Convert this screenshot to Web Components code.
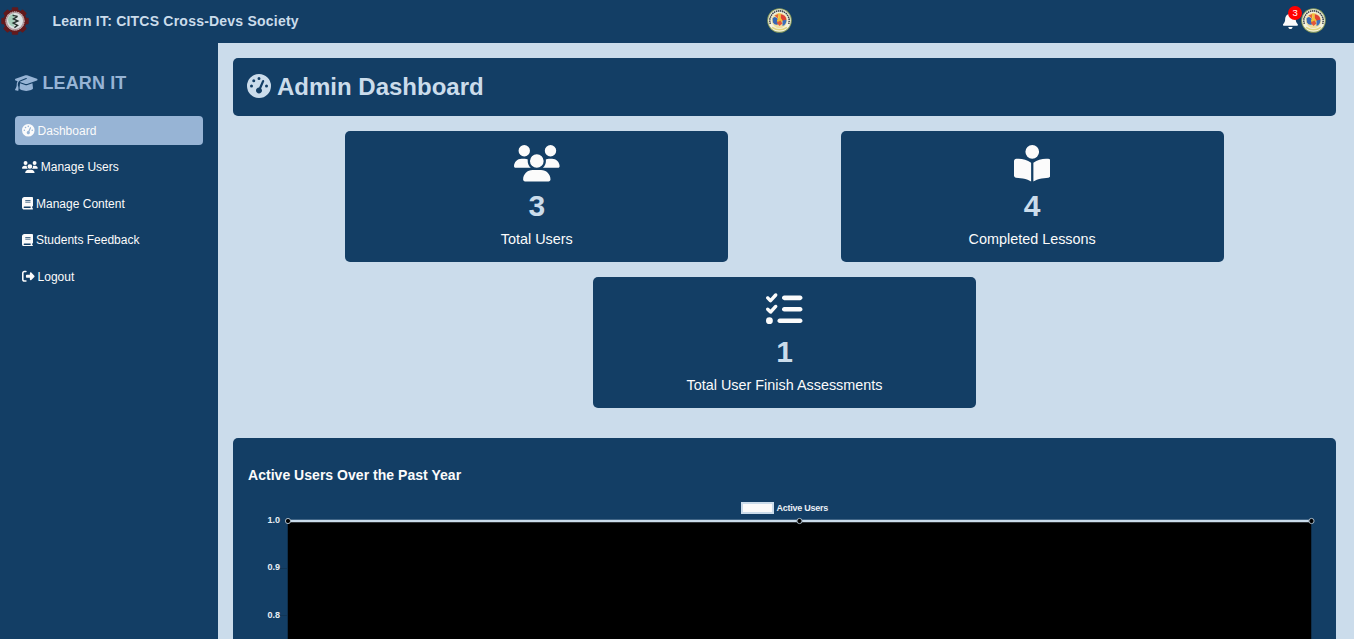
<!DOCTYPE html>
<html lang="en">
<head>
<meta charset="utf-8">
<title>Admin Dashboard</title>
<style>
:root{--navy:#133e65;--pale:#cbdceb;--mid:#97b4d5;--white:#fbfbfb}
html,body{margin:0;height:100%;overflow:hidden}
body{background:var(--pale);font-family:"Liberation Sans",Arial,sans-serif;color:var(--white)}
</style>
</head>
<body>
<dash-app></dash-app>
<script>
const ICONS={
gauge:[512,'M0 256a256 256 0 1 1 512 0A256 256 0 1 1 0 256zM288 96a32 32 0 1 0 -64 0 32 32 0 1 0 64 0zM256 416c35.3 0 64-28.7 64-64c0-17.4-6.9-33.1-18.1-44.6L366 161.7c5.3-12.1-.2-26.3-12.3-31.6s-26.3 .2-31.6 12.3L257.9 288c-.6 0-1.3 0-1.9 0c-35.3 0-64 28.7-64 64s28.7 64 64 64zM176 144a32 32 0 1 0 -64 0 32 32 0 1 0 64 0zM96 288a32 32 0 1 0 0-64 32 32 0 1 0 0 64zm352-32a32 32 0 1 0 -64 0 32 32 0 1 0 64 0z'],
users:[640,'M144 0a80 80 0 1 1 0 160A80 80 0 1 1 144 0zM512 0a80 80 0 1 1 0 160A80 80 0 1 1 512 0zM0 298.7C0 239.8 47.8 192 106.7 192h42.7c15.9 0 31 3.5 44.6 9.7c-1.3 7.2-1.9 14.7-1.9 22.3c0 38.2 16.8 72.5 43.3 96c-.2 0-.4 0-.7 0H21.3C9.6 320 0 310.4 0 298.7zM405.3 320c-.2 0-.4 0-.7 0c26.6-23.5 43.3-57.8 43.3-96c0-7.6-.7-15-1.9-22.3c13.6-6.3 28.7-9.7 44.6-9.7h42.7C592.2 192 640 239.8 640 298.7c0 11.8-9.6 21.3-21.3 21.3H405.3zM224 224a96 96 0 1 1 192 0 96 96 0 1 1 -192 0zM128 485.3C128 411.7 187.7 352 261.3 352H378.7C452.3 352 512 411.7 512 485.3c0 14.7-11.9 26.7-26.7 26.7H154.7c-14.7 0-26.7-11.9-26.7-26.7z'],
reader:[512,'M160 96a96 96 0 1 1 192 0A96 96 0 1 1 160 96zm80 152V512l-48.4-24.2c-20.9-10.4-43.5-17-66.8-19.3l-96-9.6C12.5 457.2 0 443.5 0 427V224c0-17.7 14.3-32 32-32H62.3c63.6 0 125.6 19.6 177.7 56zm32 264V248c52.1-36.4 114.1-56 177.7-56H480c17.7 0 32 14.3 32 32V427c0 16.4-12.5 30.2-28.8 31.8l-96 9.6c-23.2 2.3-45.9 8.9-66.8 19.3L272 512z'],
tasks:[512,'M152.1 38.2c9.9 8.9 10.7 24 1.8 33.9l-72 80c-4.4 4.9-10.6 7.8-17.2 7.9s-12.9-2.4-17.6-7L7 113C-2.3 103.6-2.3 88.4 7 79s24.6-9.4 33.9 0l22.1 22.1 55.1-61.2c8.9-9.9 24-10.7 33.9-1.8zm0 160c9.9 8.9 10.7 24 1.8 33.9l-72 80c-4.4 4.9-10.6 7.8-17.2 7.9s-12.9-2.4-17.6-7L7 273c-9.4-9.4-9.4-24.6 0-33.9s24.6-9.4 33.9 0l22.1 22.1 55.1-61.2c8.9-9.9 24-10.7 33.9-1.8zM224 96c0-17.7 14.3-32 32-32H480c17.7 0 32 14.3 32 32s-14.3 32-32 32H256c-17.7 0-32-14.3-32-32zm0 160c0-17.7 14.3-32 32-32H480c17.7 0 32 14.3 32 32s-14.3 32-32 32H256c-17.7 0-32-14.3-32-32zM160 416c0-17.7 14.3-32 32-32H480c17.7 0 32 14.3 32 32s-14.3 32-32 32H192c-17.7 0-32-14.3-32-32zM48 368a48 48 0 1 1 0 96 48 48 0 1 1 0-96z'],
book:[448,'M96 0C43 0 0 43 0 96V416c0 53 43 96 96 96H384h32c17.7 0 32-14.3 32-32s-14.3-32-32-32V384c17.7 0 32-14.3 32-32V32c0-17.7-14.3-32-32-32H384 96zm0 384H352v64H96c-17.7 0-32-14.3-32-32s14.3-32 32-32zm32-240c0-8.8 7.2-16 16-16H336c8.8 0 16 7.2 16 16s-7.2 16-16 16H144c-8.8 0-16-7.2-16-16zm16 48H336c8.8 0 16 7.2 16 16s-7.2 16-16 16H144c-8.8 0-16-7.2-16-16s7.2-16 16-16z'],
logout:[512,'M377.9 105.9L500.7 228.7c7.2 7.2 11.3 17.1 11.3 27.3s-4.1 20.1-11.3 27.3L377.9 406.1c-6.4 6.4-15 9.9-24 9.9c-18.7 0-33.9-15.2-33.9-33.9l0-62.1-128 0c-17.7 0-32-14.3-32-32l0-64c0-17.7 14.3-32 32-32l128 0 0-62.1c0-18.7 15.2-33.9 33.9-33.9c9 0 17.6 3.6 24 9.9zM160 96L96 96c-17.7 0-32 14.3-32 32l0 256c0 17.7 14.3 32 32 32l64 0c17.7 0 32 14.3 32 32s-14.3 32-32 32l-64 0c-53 0-96-43-96-96L0 128C0 75 43 32 96 32l64 0c17.7 0 32 14.3 32 32s-14.3 32-32 32z'],
cap:[640,'M320 32c-8.1 0-16.1 1.4-23.7 4.1L15.8 137.4C6.3 140.9 0 149.9 0 160s6.3 19.1 15.8 22.6l57.9 20.9C57.3 229.3 48 259.8 48 291.9v28.1c0 28.4-10.8 57.7-22.3 80.8c-6.5 13-13.9 25.8-22.5 37.6C0 442.7-.9 448.3 .9 453.4s6 8.9 11.2 10.2l64 16c4.2 1.1 8.7 .3 12.4-2s6.3-6.1 7.1-10.4c8.6-42.8 4.3-81.2-2.1-108.7C90.3 344.3 86 329.8 80 316.5V291.9c0-30.2 10.2-58.7 27.9-81.5c12.9-15.5 29.6-28 49.2-35.7l157-61.7c8.2-3.2 17.5 .8 20.7 9s-.8 17.5-9 20.7l-157 61.7c-12.4 4.9-23.3 12.4-32.2 21.6l159.6 57.6c7.6 2.7 15.6 4.1 23.7 4.1s16.1-1.4 23.7-4.1L624.2 182.6c9.5-3.4 15.8-12.5 15.8-22.6s-6.3-19.1-15.8-22.6L343.7 36.1C336.1 33.4 328.1 32 320 32zM128 408c0 35.3 86 72 192 72s192-36.7 192-72L496.7 262.6 354.5 314c-11.1 4-22.8 6-34.5 6s-23.5-2-34.5-6L143.3 262.6 128 408z'],
bell:[448,'M224 0c-17.7 0-32 14.3-32 32V51.2C119 66 64 130.6 64 208v18.8c0 47-17.3 92.4-48.5 127.6l-7.4 8.3c-8.4 9.4-10.4 22.9-5.3 34.4S19.4 416 32 416H416c12.6 0 24-7.4 29.2-18.9s3.1-25-5.3-34.4l-7.4-8.3C401.3 319.2 384 273.9 384 226.8V208c0-77.4-55-142-128-156.8V32c0-17.7-14.3-32-32-32zm45.3 493.3c12-12 18.7-28.3 18.7-45.3H224 160c0 17 6.7 33.3 18.7 45.3s28.3 18.7 45.3 18.7s33.3-6.7 45.3-18.7z']
};
function define(name,render){
  customElements.define(name,class extends HTMLElement{
    connectedCallback(){
      if(this.shadowRoot)return;
      this.attachShadow({mode:'open'}).innerHTML=render(this);
    }
  });
}
// Glyph sized by the host's font-size
define('fa-icon',el=>{
  const [w,d]=ICONS[el.getAttribute('name')];
  return `<style>:host{display:block;flex:none;height:1em;width:${w/512}em}svg{display:block;width:100%;height:100%;fill:currentColor}</style><svg viewBox="0 0 ${w} 512"><path d="${d}"/></svg>`;
});
define('gear-logo',()=>{
  let teeth='';
  for(let i=0;i<8;i++)teeth+=`<rect x="-3.2" y="-13.7" width="6.4" height="5" rx="1" transform="rotate(${i*45})"/>`;
  return `<style>:host{display:block;width:28px;height:28px;flex:none}svg{display:block}</style>
  <svg width="28" height="28" viewBox="-14 -14 28 28"><g fill="#621a1d">${teeth}<circle r="11.6"/></g>
  <circle r="9.6" fill="#a98f92"/><circle r="9.2" fill="none" stroke="#cdbcbe" stroke-width="1" stroke-dasharray="1 1"/><circle r="8" fill="#dde2e3"/>
  <path d="M-6.6-3.5A8 8 0 0 1-1-7.6V6A8 8 0 0 1-7-1z" fill="#a5cdb9"/>
  <path d="M-2.4-5.6L2.6-4.6M2.6-4.6L-1.6-2L2.8 0L-1.8 2L2.6 4.4L-.6 6.6" fill="none" stroke="#26332f" stroke-width="1.4"/></svg>`;
});
define('school-seal',()=>`<style>:host{display:block;width:25px;height:25px;flex:none}svg{display:block}</style>
  <svg width="25" height="25" viewBox="-12.5 -12.5 25 25"><circle r="12.3" fill="#8a9c5c"/><circle r="11.3" fill="#f3f2e0"/>
  <path d="M-9.1 3.4A9.7 9.7 0 1 1 9.1 3.4" fill="none" stroke="#3f474c" stroke-width="1.6" stroke-dasharray="1.5 .6"/>
  <path d="M-7.4 6.8Q0 11.6 7.4 6.8" fill="none" stroke="#dfd47c" stroke-width="1.6"/>
  <circle r="7.8" fill="#f0dfa0"/><path d="M-7-2Q-5-5-2-2L0 3Q-4 6-6.6 2z" fill="#3767b5"/><path d="M1-6.4Q6-5.6 7-1L4 1L1-1z" fill="#de4234"/><path d="M-5-5L-1-6.8L-1.6-2z" fill="#e4683a"/><path d="M3 0L7-.8Q7 4 3 5.6z" fill="#3a6fba"/>
  <path d="M-1.5-7H1.2L1-3L3 0L1 3H-1.6L-2.6 0L-1-3z" fill="#f3bf35"/><path d="M-3 2L1 0L3 3L0 5.6z" fill="#e2593a"/></svg>`);
define('top-bar',()=>`<style>
  :host{display:flex;align-items:center;height:43px;flex:none;background:var(--navy);position:relative;box-sizing:border-box;padding-right:28px}
  gear-logo{margin:-2px 24px 0 .5px}
  h1{margin:-2px 0 0;font-size:14px;line-height:18px;letter-spacing:.22px;color:var(--pale);width:714px;white-space:nowrap}
  school-seal{margin-top:-2px}
  .bell{position:relative;margin-left:auto;margin-right:3px;margin-top:-3px;font-size:17px}
  .badge{position:absolute;left:5px;top:-6px;width:14px;height:14px;border-radius:50%;background:#f00;color:#fff;font-size:9.5px;line-height:14px;text-align:center}
  </style><gear-logo></gear-logo><h1>Learn IT: CITCS Cross-Devs Society</h1><school-seal></school-seal>
  <div class="bell"><fa-icon name="bell"></fa-icon><span class="badge">3</span></div><school-seal></school-seal>`);
define('nav-item',el=>`<style>
  :host{display:flex;align-items:center;gap:3px;box-sizing:border-box;height:29px;padding-left:7px;border-radius:4px;font-size:12px;line-height:16px;color:var(--white)}
  :host([active]){background:var(--mid)}
  fa-icon{font-size:12.6px}
  </style><fa-icon name="${el.getAttribute('icon')}"></fa-icon><slot></slot>`);
define('side-bar',()=>`<style>
  :host{display:block;width:218px;flex:none;box-sizing:border-box;padding:29px 15px 0;background:var(--navy)}
  .brand{display:flex;align-items:center;gap:5px;height:22px;margin-bottom:22px;font-size:18px;font-weight:bold;letter-spacing:.12px;color:var(--mid);white-space:nowrap}
  nav{display:flex;flex-direction:column;gap:7.5px}
  </style><div class="brand"><fa-icon name="cap"></fa-icon>LEARN IT</div>
  <nav><nav-item icon="gauge" active>Dashboard</nav-item><nav-item icon="users">Manage Users</nav-item><nav-item icon="book">Manage Content</nav-item><nav-item icon="book">Students Feedback</nav-item><nav-item icon="logout">Logout</nav-item></nav>`);
define('page-title',()=>`<style>
  :host{display:flex;flex:none;align-items:center;gap:6px;height:58px;box-sizing:border-box;padding-left:14px;border-radius:5px;background:var(--navy);color:var(--pale);font-size:24px;font-weight:bold}
  fa-icon{margin-top:-2px}
  </style><fa-icon name="gauge"></fa-icon><span><slot></slot></span>`);
define('stat-card',el=>`<style>
  :host{display:flex;flex-direction:column;align-items:center;width:383px;height:131px;box-sizing:border-box;padding-top:14px;border-radius:5px;background:var(--navy)}
  fa-icon{font-size:36.5px}
  .n{font-size:30px;line-height:34px;margin-top:7.5px;font-weight:bold;color:var(--pale)}
  .l{font-size:14.4px;line-height:18px;margin-top:6.5px}
  </style><fa-icon name="${el.getAttribute('icon')}"></fa-icon><div class="n">${el.getAttribute('value')}</div><div class="l"><slot></slot></div>`);
define('area-chart',()=>`<style>
  :host{display:block;font-size:9px;font-weight:bold;line-height:12px;color:#e9eff5}
  .legend{display:flex;align-items:center;gap:2.5px;height:12px;padding-left:493px;letter-spacing:-.25px}
  .swatch{box-sizing:border-box;width:33px;height:12px;background:var(--white);border:2px solid var(--pale)}
  .plot{display:grid;grid-template-columns:32px 1fr}
  .axis{display:flex;flex-direction:column;text-align:right}
  .axis span{height:47.4px}
  svg{display:block;overflow:visible}
  </style><div class="legend"><span class="swatch"></span>Active Users</div>
  <div class="plot"><div class="axis"><span>1.0</span><span>0.9</span><span>0.8</span></div>
  <svg width="1040" height="150"><path d="M0 54.5h8M0 101.5h8" stroke="#113657"/><path d="M8 7H1031V150H8z"/><path d="M7.5 7V150M1031.5 7V150" stroke="#0e2e4b"/><path d="M8 7H1031" stroke="#cbdceb" stroke-width="2.4"/>
  <g stroke="#a9b9c6" stroke-width="1"><circle cx="8" cy="7" r="2.6"/><circle cx="519.5" cy="7" r="2.6"/><circle cx="1031.5" cy="7" r="2.6"/></g></svg></div>`);
define('chart-panel',()=>`<style>
  :host{display:block;flex:1;margin-top:30px;box-sizing:border-box;padding:28px 0 0 15px;border-radius:5px 5px 0 0;background:var(--navy)}
  h2{margin:0 0 18px;font-size:14px;line-height:18px;letter-spacing:.03px}
  </style><h2><slot></slot></h2><area-chart></area-chart>`);
define('dash-app',()=>`<style>
  :host{display:flex;flex-direction:column;height:639px}
  .body{display:flex;flex:1;min-height:0}
  main{display:flex;flex-direction:column;width:1103px;padding:15px 15px 0}
  .row{display:flex;justify-content:space-evenly;margin-top:15px}
  </style><top-bar></top-bar><div class="body"><side-bar></side-bar><main>
  <page-title>Admin Dashboard</page-title>
  <div class="row"><stat-card icon="users" value="3">Total Users</stat-card><stat-card icon="reader" value="4">Completed Lessons</stat-card></div>
  <div class="row"><stat-card icon="tasks" value="1">Total User Finish Assessments</stat-card></div>
  <chart-panel>Active Users Over the Past Year</chart-panel></main></div>`);
</script>
</body>
</html>
